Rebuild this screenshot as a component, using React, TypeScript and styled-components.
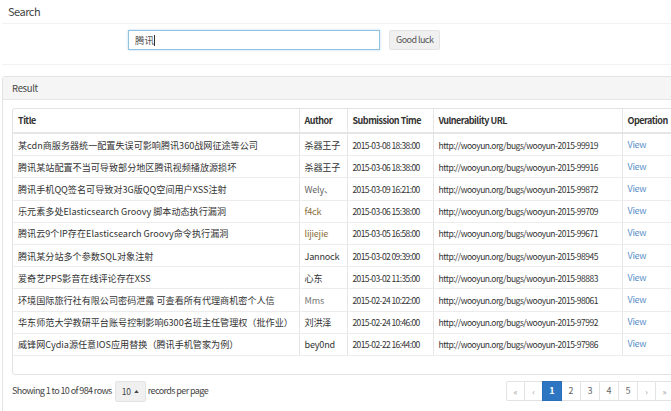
import React from 'react';
import styled, { createGlobalStyle } from 'styled-components';

const GlobalStyle = createGlobalStyle`
  html, body {
    margin: 0;
    padding: 0;
    background: #ffffff;
    overflow: hidden;
  }
  body {
    font-family: "Noto Sans CJK SC", Lato, sans-serif;
    color: #333333;
  }
`;

const Page = styled.div`
  width: 700px;
  padding-top: 4px;
`;

const SearchPanel = styled.section`
  margin: 0 0 11px 2px;
`;

const SearchHeading = styled.div`
  font-size: 11px;
  letter-spacing: -0.5px;
  color: #444;
  padding: 0 6px;
  height: 19px;
  line-height: 15px;
  border-bottom: 1px solid #f2f2f2;
`;

const SearchBody = styled.div`
  display: flex;
  align-items: center;
  padding: 6px 0 14px 126px;
  gap: 9px;
  border-bottom: 1px solid #f2f2f2;
`;

const SearchInput = styled.div`
  width: 244px;
  height: 18px;
  border: 1px solid #8fc3df;
  box-shadow: 0 0 2px rgba(102, 175, 233, 0.5);
  font-size: 9.5px;
  line-height: 18px;
  padding-left: 6px;
  color: #555;
`;

const Caret = styled.span`
  display: inline-block;
  width: 1px;
  height: 11px;
  background: #333;
  vertical-align: -2px;
`;

const GrayButton = styled.div`
  height: 18px;
  padding: 0 6px;
  background: #f0f0f0;
  border: 1px solid #e4e4e4;
  border-radius: 2px;
  font-size: 9px;
  letter-spacing: -0.55px;
  line-height: 18px;
  color: #555;
`;

const ResultPanel = styled.section`
  margin-left: 2px;
  border: 1px solid #e3e3e3;
  border-radius: 3px 0 0 0;
`;

const ResultHeading = styled.div`
  background: #f5f5f5;
  border-bottom: 1px solid #e6e6e6;
  height: 22px;
  line-height: 22px;
  padding-left: 9px;
  font-size: 9.5px;
  letter-spacing: -0.3px;
  color: #444;
`;

const ResultBody = styled.div`
  padding: 8px 0 0 9px;
`;

const TableBox = styled.div`
  border: 1px solid #e3e3e3;
  border-radius: 3px 0 0 3px;
  padding-bottom: 18px;
`;

const Table = styled.table`
  border-collapse: collapse;
  table-layout: fixed;
  width: 100%;
  line-height: 12px;
`;

const HeadCell = styled.th<{ $w?: number }>`
  box-sizing: border-box;
  width: ${p => (p.$w ? `${p.$w}px` : 'auto')};
  text-align: left;
  font-weight: 700;
  font-size: 9px;
  letter-spacing: -0.5px;
  white-space: nowrap;
  color: #333;
  height: 24px;
  padding: 0 5px;
  border-left: 1px solid #e6e6e6;
  border-bottom: 2px solid #e6e6e6;
  &:first-child {
    border-left: none;
  }
`;

const Cell = styled.td<{ $tone?: string; $size?: number; $ls?: number }>`
  height: 21.2px;
  padding: 0 5px;
  white-space: nowrap;
  overflow: hidden;
  font-size: ${p => p.$size ?? 9.1}px;
  letter-spacing: ${p => p.$ls ?? 0}px;
  color: ${p => p.$tone || '#333'};
  border-left: 1px solid #e6e6e6;
  border-bottom: 1px solid #ececec;
  &:first-child {
    border-left: none;
  }
`;

const ViewLink = styled.a`
  color: #5a8fc8;
  text-decoration: none;
`;

const Footer = styled.div`
  display: flex;
  align-items: center;
  justify-content: space-between;
  padding: 6px 0 12px 0;
`;

const Summary = styled.div`
  display: flex;
  align-items: center;
  font-size: 9px;
  letter-spacing: -0.6px;
  line-height: 12px;
  color: #444;
`;

const SizeButton = styled.div`
  margin: 0 2px 0 3px;
  height: 19px;
  width: 29px;
  background: #f0f0f0;
  border: 1px solid #e4e4e4;
  border-radius: 2px;
  display: flex;
  align-items: center;
  justify-content: center;
  gap: 3px;
  font-size: 8.5px;
  letter-spacing: -0.3px;
  color: #444;
`;

const Pager = styled.ul`
  display: flex;
  list-style: none;
  margin: 0 25px 0 0;
  padding: 0;
`;

const PageItem = styled.li<{ $active?: boolean; $arrow?: boolean }>`
  box-sizing: border-box;
  width: ${p => (p.$arrow ? 19 : 20)}px;
  height: 20px;
  margin-left: -1px;
  border: 1px solid ${p => (p.$active ? '#2a6ebd' : '#e3e3e3')};
  background: ${p => (p.$active ? '#2f76c2' : '#ffffff')};
  color: ${p => (p.$active ? '#ffffff' : p.$arrow ? '#999' : '#666')};
  font-size: ${p => (p.$arrow ? 8.5 : 9)}px;
  font-weight: ${p => (p.$active ? 700 : 400)};
  line-height: 12px;
  display: flex;
  align-items: center;
  justify-content: center;
  position: relative;
  z-index: ${p => (p.$active ? 1 : 0)};
  &:first-child {
    border-radius: 2px 0 0 2px;
  }
`;

type Row = {
  title: string;
  author: string;
  authorTone?: string;
  time: string;
  id: string;
};

const rows: Row[] = [
  { title: '某cdn商服务器统一配置失误可影响腾讯360战网征途等公司', author: '杀器王子', time: '2015-03-08 18:38:00', id: '99919' },
  { title: '腾讯某站配置不当可导致部分地区腾讯视频播放源损坏', author: '杀器王子', time: '2015-03-06 18:38:00', id: '99916' },
  { title: '腾讯手机QQ签名可导致对3G版QQ空间用户XSS注射', author: 'Wely、', authorTone: '#666', time: '2015-03-09 16:21:00', id: '99872' },
  { title: '乐元素多处Elasticsearch Groovy 脚本动态执行漏洞', author: 'f4ck', authorTone: '#8a6d3b', time: '2015-03-06 15:38:00', id: '99709' },
  { title: '腾讯云9个IP存在Elasticsearch Groovy命令执行漏洞', author: 'lijiejie', authorTone: '#8a6d3b', time: '2015-03-05 16:58:00', id: '99671' },
  { title: '腾讯某分站多个参数SQL对象注射', author: 'Jannock', time: '2015-03-02 09:39:00', id: '98945' },
  { title: '爱奇艺PPS影音在线评论存在XSS', author: '心东', time: '2015-03-02 11:35:00', id: '98883' },
  { title: '环境国际旅行社有限公司密码泄露 可查看所有代理商机密个人信', author: 'Mms', authorTone: '#777', time: '2015-02-24 10:22:00', id: '98061' },
  { title: '华东师范大学教研平台账号控制影响6300名班主任管理权（批作业）', author: '刘洪泽', time: '2015-02-24 10:46:00', id: '97992' },
  { title: '威锋网Cydia源任意IOS应用替换（腾讯手机管家为例）', author: 'bey0nd', time: '2015-02-22 16:44:00', id: '97986' },
];

const pages = ['«', '‹', '1', '2', '3', '4', '5', '›', '»'];

const App: React.FC = () => {
  return (
    <>
      <GlobalStyle />
      <Page>
        <SearchPanel>
          <SearchHeading>Search</SearchHeading>
          <SearchBody>
            <SearchInput>
              腾讯<Caret />
            </SearchInput>
            <GrayButton>Good luck</GrayButton>
          </SearchBody>
        </SearchPanel>
        <ResultPanel>
          <ResultHeading>Result</ResultHeading>
          <ResultBody>
            <TableBox>
              <Table>
                <thead>
                  <tr>
                    <HeadCell $w={286}>Title</HeadCell>
                    <HeadCell $w={48}>Author</HeadCell>
                    <HeadCell $w={86}>Submission Time</HeadCell>
                    <HeadCell $w={189}>Vulnerability URL</HeadCell>
                    <HeadCell>Operation</HeadCell>
                  </tr>
                </thead>
                <tbody>
                  {rows.map(r => (
                    <tr key={r.id}>
                      <Cell>{r.title}</Cell>
                      <Cell $tone={r.authorTone} $ls={-0.2}>{r.author}</Cell>
                      <Cell $size={8.5} $ls={-0.6}>{r.time}</Cell>
                      <Cell $size={8.5} $ls={-0.5}>http://wooyun.org/bugs/wooyun-2015-{r.id}</Cell>
                      <Cell $size={9} $ls={-0.3}>
                        <ViewLink href="#">View</ViewLink>
                      </Cell>
                    </tr>
                  ))}
                </tbody>
              </Table>
            </TableBox>
            <Footer>
              <Summary>
                Showing 1 to 10 of 984 rows
                <SizeButton>
                  10
                  <svg width="5" height="3" viewBox="0 0 6 4">
                    <path d="M0 4 L3 0 L6 4 Z" fill="#444" />
                  </svg>
                </SizeButton>
                records per page
              </Summary>
              <Pager>
                {pages.map((p, i) => (
                  <PageItem key={i} $active={p === '1'} $arrow={!/\d/.test(p)}>
                    {p}
                  </PageItem>
                ))}
              </Pager>
            </Footer>
          </ResultBody>
        </ResultPanel>
      </Page>
    </>
  );
};

export default App;
